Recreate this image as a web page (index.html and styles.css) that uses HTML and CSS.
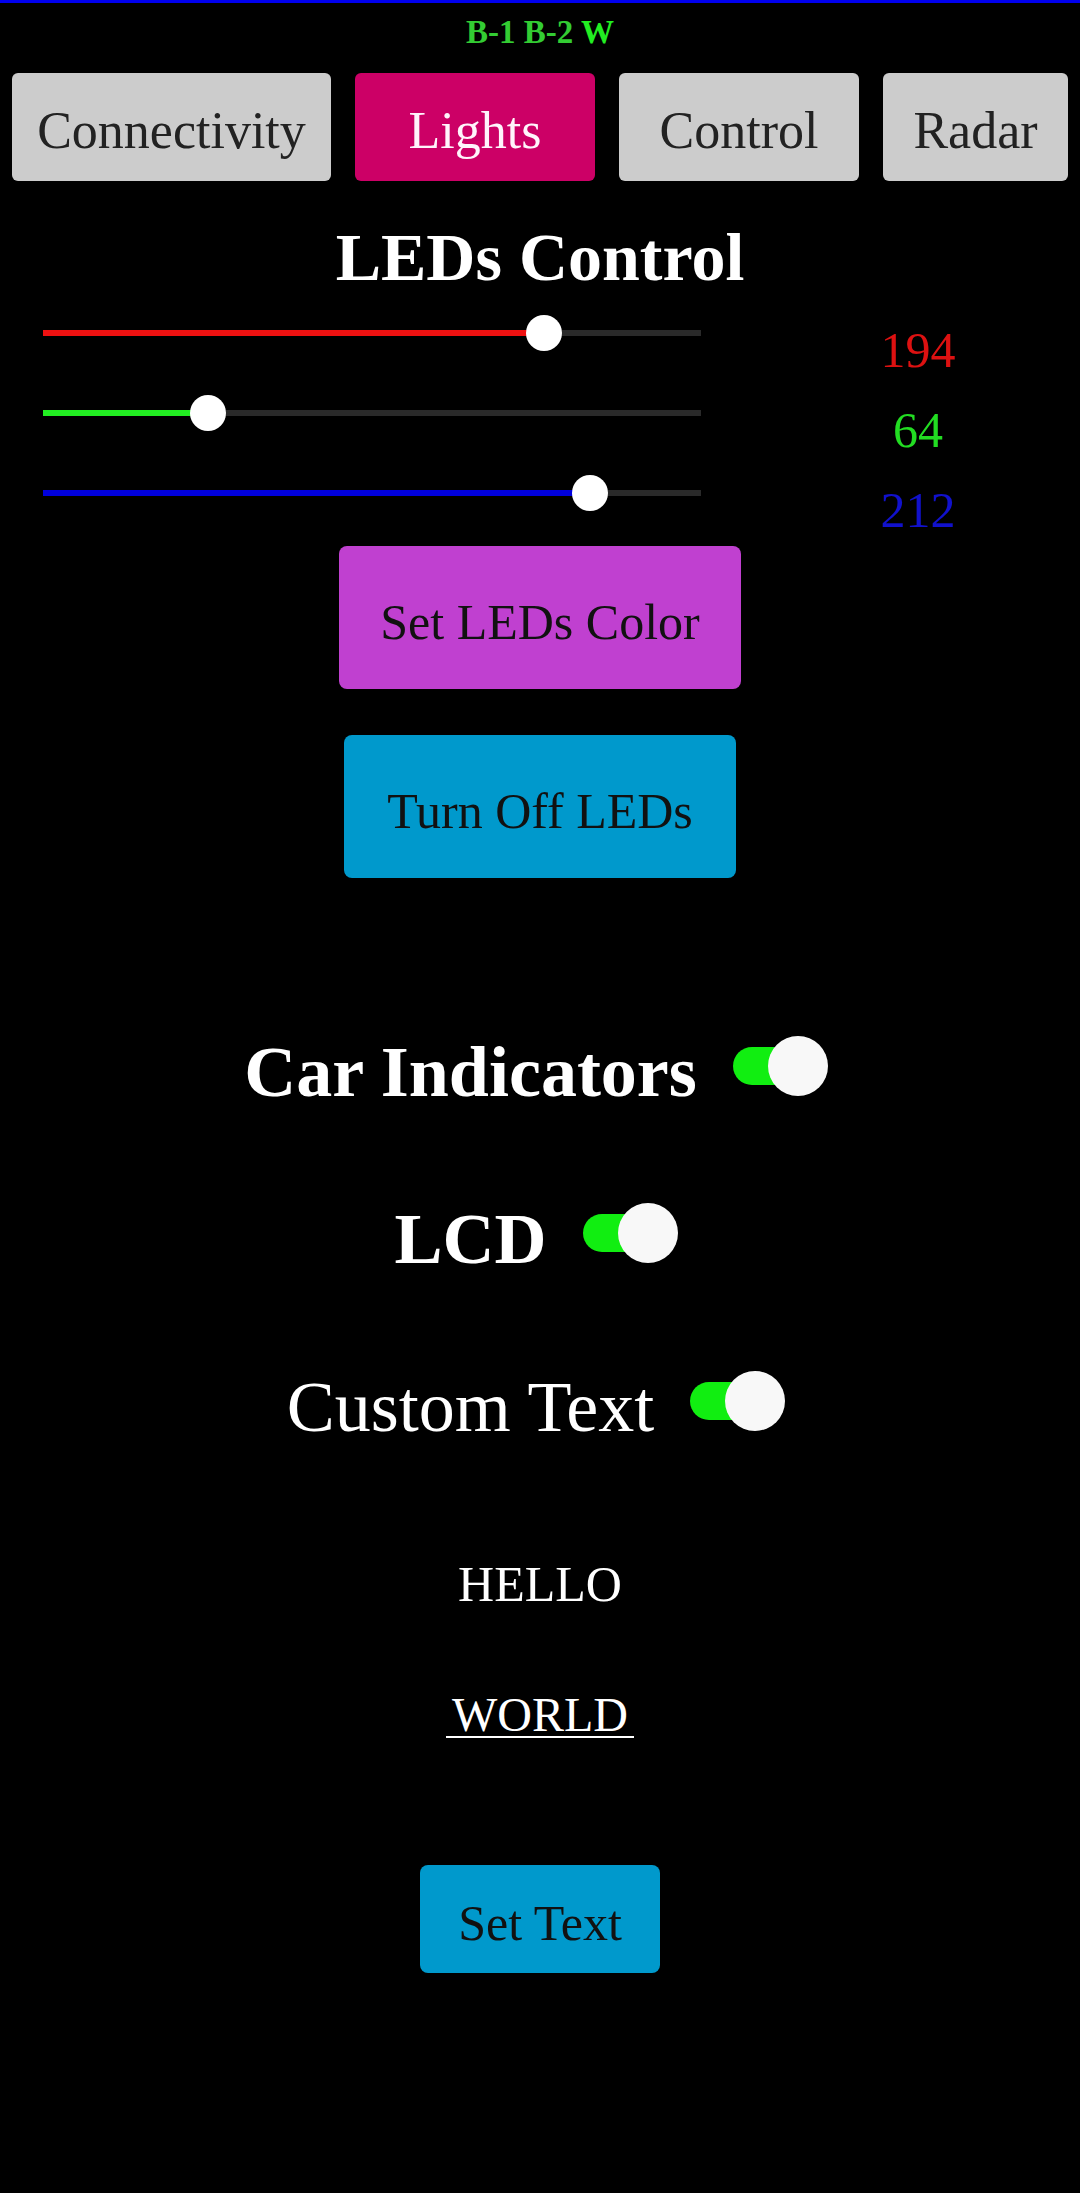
FILE: index.html
```html
<!DOCTYPE html>
<html lang="en">
<head>
<meta charset="utf-8">
<title>Lights</title>
<link rel="stylesheet" href="styles.css">
</head>
<body>
<header class="topbar">
  <div class="status"><span>B-1</span> <span>B-2</span> <span class="on">W</span></div>
  <nav class="tabs">
    <button class="tab">Connectivity</button>
    <button class="tab active">Lights</button>
    <button class="tab">Control</button>
    <button class="tab">Radar</button>
  </nav>
</header>
<main>
  <h1 class="title">LEDs Control</h1>
  <section class="sliders">
    <div class="slider-row red">
      <div class="slider"><div class="track" style="--v:76.08%"><div class="fill"></div><div class="thumb"></div></div></div>
      <div class="value">194</div>
    </div>
    <div class="slider-row green">
      <div class="slider"><div class="track" style="--v:25.1%"><div class="fill"></div><div class="thumb"></div></div></div>
      <div class="value">64</div>
    </div>
    <div class="slider-row blue">
      <div class="slider"><div class="track" style="--v:83.14%"><div class="fill"></div><div class="thumb"></div></div></div>
      <div class="value">212</div>
    </div>
  </section>
  <button class="btn btn-color">Set LEDs Color</button>
  <button class="btn btn-off">Turn Off LEDs</button>

  <div class="switch-row row-car">
    <span class="label bold">Car Indicators</span>
    <span class="toggle"><span class="trk"></span><span class="knob"></span></span>
  </div>
  <div class="switch-row row-lcd">
    <span class="label bold">LCD</span>
    <span class="toggle"><span class="trk"></span><span class="knob"></span></span>
  </div>
  <div class="switch-row row-custom">
    <span class="label">Custom Text</span>
    <span class="toggle"><span class="trk"></span><span class="knob"></span></span>
  </div>

  <div class="hello">HELLO</div>
  <div class="world-wrap"><span class="world">WORLD</span></div>
  <button class="btn btn-text">Set Text</button>
</main>
</body>
</html>
```
FILE: styles.css
```css
* { box-sizing: border-box; }

body {
  margin: 0;
  background: #000;
  color: #fff;
  font-family: "Liberation Serif", "Times New Roman", serif;
}

.topbar { border-top: 3px solid #0000ee; }

.status {
  padding-top: 9px;
  line-height: 40px;
  font-size: 33px;
  font-weight: bold;
  text-align: center;
  color: #33cc33;
}
.status .on { color: #22ee22; }

.tabs {
  margin-top: 21px;
  padding: 0 12px;
  display: grid;
  grid-template-columns: 319px 240px 240px 185px;
  column-gap: 24px;
}

.tab {
  height: 108px;
  padding: 8px 0 0;
  line-height: 100px;
  font-family: inherit;
  font-size: 52px;
  text-align: center;
  white-space: nowrap;
  overflow: hidden;
  background: #cccccc;
  color: #222;
  border: 0;
  border-radius: 6px;
}
.tab.active { background: #cc0066; color: #fff4fb; }

.title {
  margin: 36px 0 0;
  line-height: 80px;
  font-size: 68px;
  font-weight: bold;
  text-align: center;
}

.slider-row {
  display: grid;
  grid-template-columns: 658px 200px;
  column-gap: 117px;
  padding-left: 43px;
  height: 80px;
}
.slider-row.red { --c: #ee1111; --tc: #dd1111; }
.slider-row.green { --c: #22ee22; --tc: #22dd22; }
.slider-row.blue { --c: #0000dd; --tc: #1111cc; }

.slider { padding-top: 33px; }
.track {
  position: relative;
  height: 6px;
  background: #2a2a2a;
}
.fill {
  width: var(--v);
  height: 100%;
  background: var(--c);
}
.thumb {
  position: absolute;
  left: var(--v);
  top: 3px;
  width: 36px;
  height: 36px;
  margin: -18px 0 0 -18px;
  border-radius: 50%;
  background: #fff;
}
.value {
  margin-top: 23px;
  line-height: 60px;
  font-size: 50px;
  text-align: center;
  color: var(--tc);
}

.btn {
  display: block;
  margin-left: auto;
  margin-right: auto;
  border: 0;
  border-radius: 8px;
  font-family: inherit;
  font-size: 50px;
  color: #111;
  text-align: center;
  white-space: nowrap;
  padding: 9px 0 0;
  height: 143px;
  line-height: 134px;
}
.btn-color { width: 402px; margin-top: 9px; background: #c040d0; }
.btn-off { width: 392px; margin-top: 46px; background: #0099cc; }
.btn-text {
  width: 240px;
  height: 108px;
  padding-top: 8px;
  line-height: 100px;
  margin-top: 127px;
  background: #0099cc;
}

.switch-row {
  display: flex;
  justify-content: center;
  align-items: flex-start;
  gap: 36px;
  height: 100px;
  padding-right: 8px;
}
.row-car { margin-top: 141px; }
.row-lcd { margin-top: 67px; }
.row-custom { margin-top: 68px; }

.label {
  margin-top: 3px;
  line-height: 100px;
  font-size: 72px;
  white-space: nowrap;
}
.label.bold { font-weight: bold; }

.toggle {
  position: relative;
  flex: none;
  width: 95px;
  height: 60px;
  margin-top: 17px;
}
.trk {
  position: absolute;
  left: 0;
  top: 11px;
  width: 66px;
  height: 38px;
  border-radius: 19px;
  background: #11ee11;
}
.knob {
  position: absolute;
  right: 0;
  top: 0;
  width: 60px;
  height: 60px;
  border-radius: 50%;
  background: #f8f8f8;
}

.hello {
  margin-top: 100px;
  line-height: 60px;
  font-size: 50px;
  text-align: center;
}
.world-wrap {
  margin-top: 80px;
  display: flex;
  justify-content: center;
}
.world {
  display: block;
  padding: 0 6px;
  line-height: 42px;
  font-size: 48px;
  border-bottom: 2px solid #fff;
}
```
